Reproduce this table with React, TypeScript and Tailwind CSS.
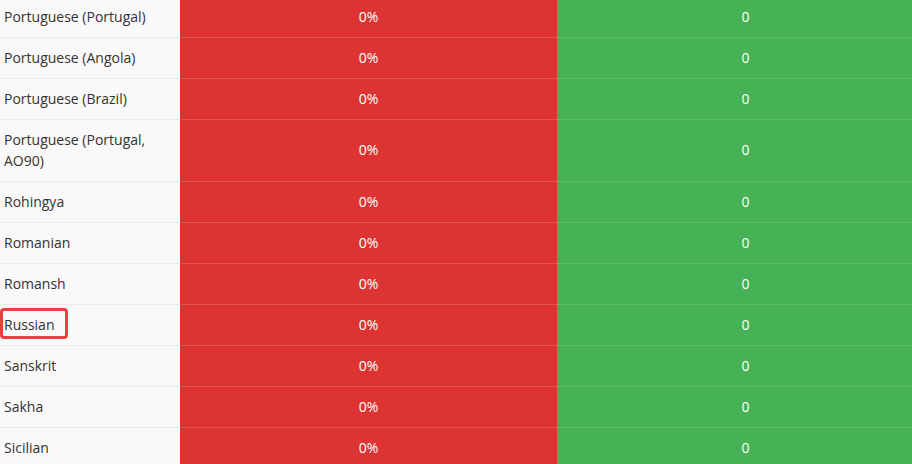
import React from "react";

const rows: { name: string; highlight?: boolean }[] = [
  { name: "Portuguese (Portugal)" },
  { name: "Portuguese (Angola)" },
  { name: "Portuguese (Brazil)" },
  { name: "Portuguese (Portugal, AO90)" },
  { name: "Rohingya" },
  { name: "Romanian" },
  { name: "Romansh" },
  { name: "Russian", highlight: true },
  { name: "Sanskrit" },
  { name: "Sakha" },
  { name: "Sicilian" },
];

export default function App() {
  return (
    <div
      className="w-[912px] h-[464px] overflow-hidden bg-white"
      style={{ fontFamily: '"Open Sans", "Liberation Sans", sans-serif' }}
    >
      <div className="-mt-[3px] w-[934px] flex flex-col text-[14px] leading-[21px]">
        {rows.map((r) => (
          <div key={r.name} className="flex">
            <div className="relative w-[180px] shrink-0 bg-[#f9f9f9] border-b border-[#eaeaea] pl-[4px] pr-[6px] pt-[9px] pb-[10px] text-[#333]">
              {r.highlight && (
                <div className="absolute left-[0px] top-[3px] w-[68px] h-[31px] border-[3px] border-[#e9403f] rounded-[4px]" />
              )}
              {r.name}
            </div>
            <div className="w-[377px] shrink-0 bg-[#dd3333] border-b border-[#e25555] text-white flex items-center justify-center pb-[2px]">
              0%
            </div>
            <div className="w-[377px] shrink-0 bg-[#46b255] border-b border-[#5cbc68] text-white flex items-center justify-center pb-[2px]">
              0
            </div>
          </div>
        ))}
      </div>
    </div>
  );
}
